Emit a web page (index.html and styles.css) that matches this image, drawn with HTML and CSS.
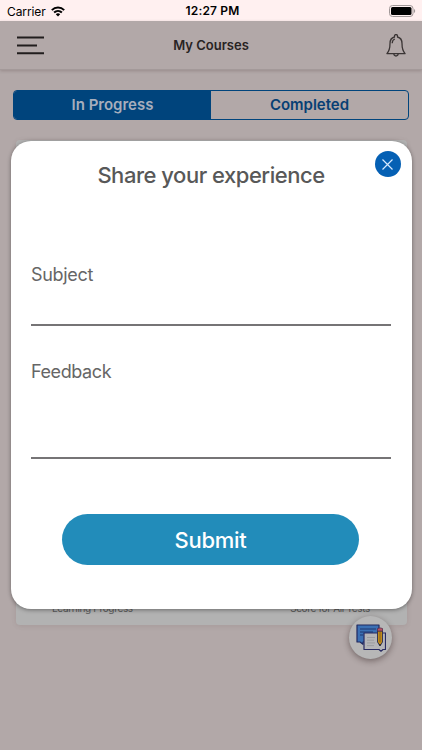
FILE: index.html
```html
<!DOCTYPE html>
<html lang="en">
<head>
<meta charset="utf-8">
<title>My Courses</title>
<link rel="stylesheet" href="styles.css">
</head>
<body>
<div class="app">
  <div class="status">
    <div class="carrier"><span>Carrier</span>
      <svg class="wifi" width="14" height="11" viewBox="0 0 14 11" fill="none" stroke="#000" stroke-width="2"><path d="M.8 4.1a9 9 0 0 1 12.4 0M3.1 6.5a5.7 5.7 0 0 1 7.8 0"/><path d="M7 10.5 4.8 8.3a3.2 3.2 0 0 1 4.4 0z" fill="#000" stroke="none"/></svg>
    </div>
    <span class="time">12:27 PM</span>
    <svg class="battery" width="27" height="12" viewBox="0 0 27 12"><rect x=".5" y=".5" width="23.5" height="11" rx="3" fill="none" stroke="#a09797"/><rect x="2" y="2" width="20.5" height="8" rx="1.5"/><path d="M25 4c1.6.5 1.6 3.500 0 4z" fill="#a09797"/></svg>
  </div>
  <header class="nav">
    <svg width="27" height="19" viewBox="0 0 27 19" stroke="#211d1d" stroke-width="2"><path d="M0 1.500h27M0 9.500h20M0 17.200h27"/></svg>
    <span class="heading">My Courses</span>
    <svg class="bell" width="20" height="24" viewBox="0 0 20 24" fill="none" stroke="#3b3535" stroke-width="1.300" stroke-linejoin="round"><path d="M8.500 3V2a1.500 1.500 0 0 1 3 0v1C14.500 3.700 16 6 16 9.500c0 5.500.8 7.700 3.100 10.100H.9C3.200 17.200 4 15 4 9.500 4 6 5.500 3.700 8.500 3zM7.800 19.800c.2 2.900 4.200 2.900 4.400 0M6.200 9.300c0-2.300.9-3.700 2.700-4.300"/></svg>
  </header>
  <div class="tabs"><div class="tab active">In Progress</div><div class="tab">Completed</div></div>
  <section class="course">
    <span class="left">Learning Progress</span><span class="right">Score for All Tests</span>
  </section>
  <div class="chat">
    <svg width="30" height="28" viewBox="0 0 30 28"><path d="M1 1h22v17H7v2.300L4 18H1z" fill="#3b70b4" stroke="#20285f" stroke-width="1.200" stroke-linejoin="round"/><path d="M4 5h16M4 8h13M4 11h3" stroke="#20376f"/><path d="M8 9h21.500v16.500H27l-2 1.700-2-1.700H8z" fill="#b5b5b8" stroke="#292b62" stroke-width="1.200" stroke-linejoin="round"/><path d="M11 13.500h8M11 16.200h7M11 18.900h8M11 21.600h7" stroke="#969698" stroke-width=".8"/><path d="M21.500 7h5v11L24 22l-2.500-4z" fill="#c18b18" stroke="#292b50" stroke-width=".9"/><path d="M24 8v10" stroke="#805b22" stroke-width=".8"/><path d="M21.500 7V4.500q2.500-1.200 5 0V7z" fill="#bd5264" stroke="#53304d" stroke-width=".8"/><path d="m23 20 1 2 1-2z" fill="#222"/></svg>
  </div>
  <form class="modal">
    <button class="close" type="button" aria-label="Close"><svg width="11" height="11" viewBox="0 0 11 11" stroke="#d6e9ff" stroke-width="1.200"><path d="m.5.500 10 10m0-10-10 10"/></svg></button>
    <h1>Share your experience</h1>
    <div class="field subject"><span class="label">Subject</span></div>
    <div class="field feedback"><span class="label fb">Feedback</span></div>
    <button class="submit" type="button">Submit</button>
  </form>
</div>
</body>
</html>
```
FILE: styles.css
```css
* { box-sizing: border-box; }
body { margin: 0; font-family: Inter, "Liberation Sans", sans-serif; }
svg { display: block; flex: none; }
.app { position: relative; width: 422px; height: 750px; overflow: hidden; background: #b2a8a8; }
.status { height: 21px; padding: 0 6px 0 7px; background: #fff0f0; display: grid; grid-template-columns: 1fr auto 1fr; align-items: center; color: #000; }
.carrier { display: flex; align-items: center; gap: 5px; font-size: 12px; line-height: 21px; letter-spacing: -.1px; }
.time { font-size: 12px; font-weight: 600; letter-spacing: .15px; line-height: 21px; padding: 0 0 1px 2px; }
.battery { justify-self: end; }
.nav { height: 49px; padding: 0 16px 0 17px; display: flex; align-items: center; justify-content: space-between; border-bottom: 1px solid #a39999; box-shadow: 0 1px 3px rgba(70, 50, 50, .25); }
.heading { font-size: 13px; font-weight: 600; color: #282323; letter-spacing: 0; margin: 0 8px 0 0; }
.bell { margin-top: 2px; }
.tabs { display: flex; height: 30px; margin: 20px 13px 0; border: 1px solid #00447c; border-radius: 4px; overflow: hidden; }
.tab { flex: 1; text-align: center; font-size: 15px; font-weight: 600; line-height: 28px; color: #073f74; }
.active { background: #00447c; color: #a7aebc; }
.course { height: 485px; margin: 20px 15px 0 16px; padding: 0 37px 11px 36px; background: #b2b2b2; border-radius: 4px; box-shadow: 0 1px 5px rgba(80, 60, 60, .12); display: flex; align-items: flex-end; justify-content: space-between; font-size: 10px; letter-spacing: -.33px; color: #5b5b5b; }
.chat { position: absolute; left: 349px; top: 616px; width: 43px; height: 43px; border-radius: 50%; background: #b7b7b7; display: grid; place-items: center; box-shadow: 0 2px 6px rgba(40, 25, 25, .45); }
.modal { position: absolute; left: 10.5px; top: 140.5px; width: 401px; height: 468.5px; margin: 0; padding: 20px 20.5px; border-radius: 20px; background: #fff; box-shadow: 0 1px 4px rgba(0, 0, 0, .4); display: flex; flex-direction: column; }
.close { position: absolute; left: 364px; top: 10.5px; width: 26px; height: 26px; padding: 0; border: 0; border-radius: 50%; background: #0560b4; display: grid; place-items: center; }
h1 { margin: 0; text-align: center; font-size: 22px; line-height: 28px; font-weight: 500; letter-spacing: -.48px; color: #585858; }
.field { border-bottom: 2px solid #767476; font-size: 18px; line-height: 24px; letter-spacing: -.3px; color: #666; }
.subject { height: 63px; margin-top: 74.5px; }
.feedback { height: 99px; margin-top: 34px; letter-spacing: -.4px; }
.submit { width: 297px; height: 51px; margin: 55px auto 0 31px; padding: 1px 0 0; border: 0; border-radius: 26px; background: #228cba; color: #fff; font: 500 22px/50px Inter, "Liberation Sans", sans-serif; letter-spacing: -.3px; }
```
